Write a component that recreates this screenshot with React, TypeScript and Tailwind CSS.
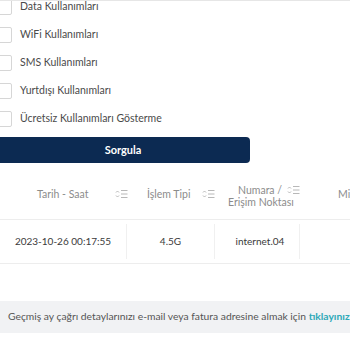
import React from "react";

function SortIcon() {
  return (
    <svg width="13" height="10" viewBox="0 0 13 10" fill="none" stroke="#b8b8b8" strokeWidth="1" className="shrink-0">
      <path d="M1 3.5 L2.5 2 L4 3.5" />
      <path d="M1 6.5 L2.5 8 L4 6.5" />
      <path d="M6 1.5 H12.5" />
      <path d="M6 5 H12.5" />
      <path d="M6 8.5 H12.5" />
    </svg>
  );
}

const items = [
  "Data Kullanımları",
  "WiFi Kullanımları",
  "SMS Kullanımları",
  "Yurtdışı Kullanımları",
  "Ücretsiz Kullanımları Gösterme",
];

export default function App() {
  return (
    <div
      className="w-[350px] h-[350px] overflow-hidden bg-white border-t border-[#e6e6e6]"
      style={{ fontFamily: "Lato, 'Noto Sans', sans-serif" }}
    >
      <div className="flex flex-col -mt-[8px]">
        {items.map((t) => (
          <div key={t} className="h-7 flex items-center gap-2 -ml-1">
            <div className="w-4 h-4 border border-[#d6d6d6] rounded-[2px] bg-white shrink-0" />
            <span className="text-[10.5px] text-[#4a4a4a]">{t}</span>
          </div>
        ))}
      </div>

      <button className="mt-[4px] -ml-1 w-[254px] h-[26px] rounded-[4px] bg-[#0c2a52] text-white text-[11px] font-bold flex items-center justify-center">
        Sorgula
      </button>

      <div className="mt-[13px] flex h-[44px] border-b border-[#ededed] text-[10.5px] text-[#8c8c8c] whitespace-nowrap">
        <div className="w-[131px] flex items-start pt-[11px] shrink-0">
          <span className="pl-[37px] leading-[14px]">Tarih - Saat</span>
          <span className="ml-auto mr-[3px] mt-[2px]"><SortIcon /></span>
        </div>
        <div className="w-[88px] flex items-start pt-[11px] shrink-0">
          <span className="pl-[16px] leading-[14px]">İşlem Tipi</span>
          <span className="ml-[12px] mt-[2px]"><SortIcon /></span>
        </div>
        <div className="w-[81px] flex flex-col pt-[8px] shrink-0 leading-[12px]">
          <div className="flex items-center">
            <span className="pl-[19px]">Numara /</span>
            <span className="ml-[5px]"><SortIcon /></span>
          </div>
          <span className="pl-[9px]">Erişim Noktası</span>
        </div>
        <div className="flex items-start pt-[11px]">
          <span className="pl-[38px] leading-[14px]">Miktar</span>
        </div>
      </div>

      <div className="flex h-[44px] border-b border-[#ededed] text-[10px] text-[#3a3a3a] whitespace-nowrap">
        <div className="w-[127px] shrink-0 flex items-center justify-center border-r border-[#f0f0f0] my-[4px]">
          2023-10-26 00:17:55
        </div>
        <div className="w-[88px] shrink-0 flex items-center justify-center border-r border-[#f0f0f0] my-[4px]">
          4.5G
        </div>
        <div className="w-[85px] shrink-0 flex items-center justify-center border-r border-[#f0f0f0] my-[4px] pl-[6px]">
          internet.04
        </div>
        <div className="flex-1" />
      </div>

      <div className="mt-[37px] h-[32px] bg-[#f1f2f4] flex items-center pl-[8px] whitespace-nowrap text-[10.3px] text-[#555]">
        Geçmiş ay çağrı detaylarınızı e-mail veya fatura adresine almak için&nbsp;
        <span className="text-[#2fa9b8] font-bold">tıklayınız</span>
      </div>
    </div>
  );
}
